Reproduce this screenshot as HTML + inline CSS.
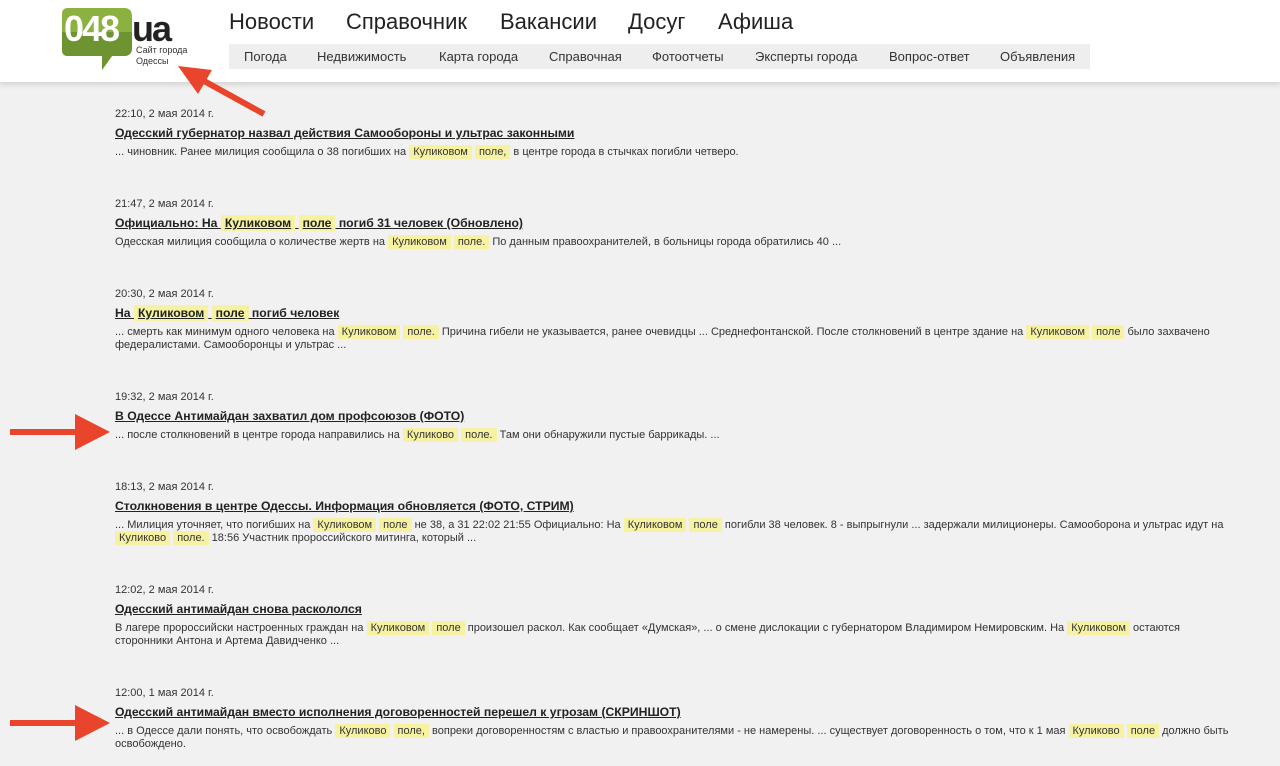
<!DOCTYPE html>
<html><head><meta charset="utf-8"><style>
body{margin:0;width:1280px;height:766px;background:#f1f1f1;font-family:"Liberation Sans",sans-serif;color:#222;overflow:hidden;position:relative}
.hd{position:absolute;left:0;top:0;width:1280px;height:82px;background:#fff;box-shadow:0 2px 6px rgba(0,0,0,.15)}
.big{position:absolute;top:9px;font-size:22px;color:#222}
.sub{position:absolute;left:229px;top:44px;width:861px;height:25px;background:#eee}
.sub span{position:absolute;top:5px;font-size:13px;color:#333}
.e{position:absolute;left:115px;width:1130px}
.d{font-size:11px;color:#333;height:18px;line-height:14px}
.t{font-size:12.2px;font-weight:bold;text-decoration:underline;color:#222;line-height:16px;height:19px}
.x{font-size:11px;line-height:13px;color:#333;margin-top:2px}
.h{background:#f6f2a2;padding:1px 4px}
</style></head><body>
<div class="hd">
<svg style="position:absolute;left:62px;top:8px" width="72" height="64"><path d="M6 0H62Q70 0 70 8V40Q70 48 62 48H50L40 62V48H6Q0 48 0 42V6Q0 0 6 0Z" fill="#8bb140"/><path d="M0 24H70V40Q70 48 62 48H50L40 62V48H6Q0 48 0 42Z" fill="#6d9430"/></svg>
<div style="position:absolute;left:64px;top:8px;font-size:36px;font-weight:bold;color:#fff;letter-spacing:-2px">048</div>
<div style="position:absolute;left:132px;top:8px;font-size:36px;font-weight:bold;color:#222;letter-spacing:-2px">ua</div>
<div style="position:absolute;left:136px;top:45px;font-size:9px;line-height:11px;color:#333">Сайт города<br>Одессы</div>
<span class="big" style="left:229px">Новости</span><span class="big" style="left:346px">Справочник</span><span class="big" style="left:500px">Вакансии</span><span class="big" style="left:628px">Досуг</span><span class="big" style="left:718px">Афиша</span>
<div class="sub"><span style="left:15px">Погода</span><span style="left:88px">Недвижимость</span><span style="left:210px">Карта города</span><span style="left:320px">Справочная</span><span style="left:423px">Фотоотчеты</span><span style="left:526px">Эксперты города</span><span style="left:660px">Вопрос-ответ</span><span style="left:771px">Объявления</span></div>
</div>

<div class="e" style="top:107px"><div class="d">22:10, 2 мая 2014 г.</div><div class="t">Одесский губернатор назвал действия Самообороны и ультрас законными</div><div class="x">... чиновник. Ранее милиция сообщила о 38 погибших на <span class="h">Куликовом</span> <span class="h">поле,</span> в центре города в стычках погибли четверо.</div></div>

<div class="e" style="top:197px"><div class="d">21:47, 2 мая 2014 г.</div><div class="t">Официально: На <span class="h">Куликовом</span> <span class="h">поле</span> погиб 31 человек (Обновлено)</div><div class="x">Одесская милиция сообщила о количестве жертв на <span class="h">Куликовом</span> <span class="h">поле.</span> По данным правоохранителей, в больницы города обратились 40 ...</div></div>

<div class="e" style="top:287px"><div class="d">20:30, 2 мая 2014 г.</div><div class="t">На <span class="h">Куликовом</span> <span class="h">поле</span> погиб человек</div><div class="x">... смерть как минимум одного человека на <span class="h">Куликовом</span> <span class="h">поле.</span> Причина гибели не указывается, ранее очевидцы ... Среднефонтанской. После столкновений в центре здание на <span class="h">Куликовом</span> <span class="h">поле</span> было захвачено федералистами. Самооборонцы и ультрас ...</div></div>

<div class="e" style="top:390px"><div class="d">19:32, 2 мая 2014 г.</div><div class="t">В Одессе Антимайдан захватил дом профсоюзов (ФОТО)</div><div class="x">... после столкновений в центре города направились на <span class="h">Куликово</span> <span class="h">поле.</span> Там они обнаружили пустые баррикады. ...</div></div>

<div class="e" style="top:480px"><div class="d">18:13, 2 мая 2014 г.</div><div class="t">Столкновения в центре Одессы. Информация обновляется (ФОТО, СТРИМ)</div><div class="x">... Милиция уточняет, что погибших на <span class="h">Куликовом</span> <span class="h">поле</span> не 38, а 31 22:02 21:55 Официально: На <span class="h">Куликовом</span> <span class="h">поле</span> погибли 38 человек. 8 - выпрыгнули ... задержали милиционеры. Самооборона и ультрас идут на <span class="h">Куликово</span> <span class="h">поле.</span> 18:56 Участник пророссийского митинга, который ...</div></div>

<div class="e" style="top:583px"><div class="d">12:02, 2 мая 2014 г.</div><div class="t">Одесский антимайдан снова раскололся</div><div class="x" style="width:1100px">В лагере пророссийски настроенных граждан на <span class="h">Куликовом</span> <span class="h">поле</span> произошел раскол. Как сообщает «Думская», ... о смене дислокации с губернатором Владимиром Немировским. На <span class="h">Куликовом</span> остаются сторонники Антона и Артема Давидченко ...</div></div>

<div class="e" style="top:686px"><div class="d">12:00, 1 мая 2014 г.</div><div class="t">Одесский антимайдан вместо исполнения договоренностей перешел к угрозам (СКРИНШОТ)</div><div class="x">... в Одессе дали понять, что освобождать <span class="h">Куликово</span> <span class="h">поле,</span> вопреки договоренностям с властью и правоохранителями - не намерены. ... существует договоренность о том, что к 1 мая <span class="h">Куликово</span> <span class="h">поле</span> должно быть освобождено.</div></div>

<svg style="position:absolute;left:0;top:0" width="1280" height="766">
<g stroke="#e8452c" stroke-width="6" fill="#e8452c">
<line x1="264" y1="114" x2="195" y2="76"/><polygon points="178,66 212,70 198,94" stroke="none"/>
<line x1="10" y1="432" x2="80" y2="432"/><polygon points="110,432 75,414 75,450" stroke="none"/>
<line x1="10" y1="723" x2="80" y2="723"/><polygon points="110,723 75,705 75,741" stroke="none"/>
</g></svg>
</body></html>
